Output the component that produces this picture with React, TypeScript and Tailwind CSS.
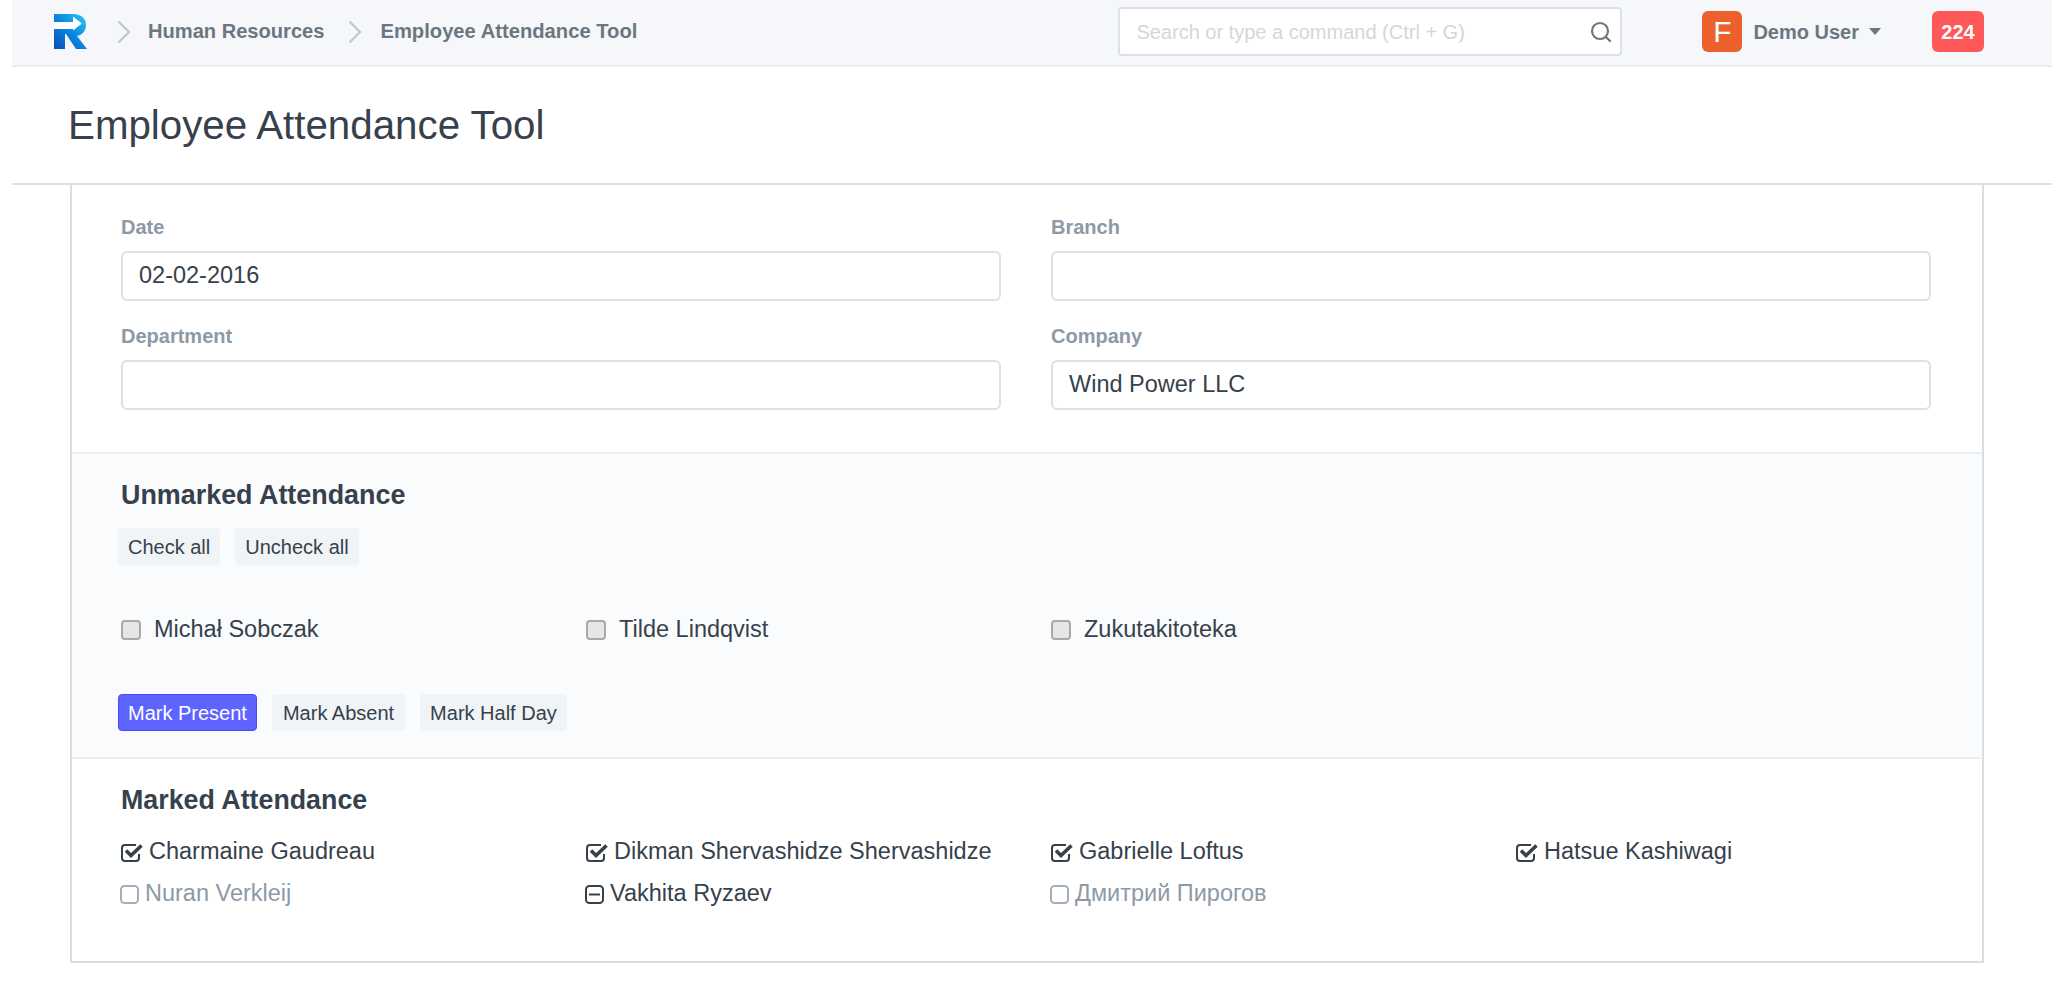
import { Search } from 'lucide-react'

const btn = 'h-[37px] px-[9px] rounded-[4px] border border-transparent bg-[#f0f4f7] text-[#36414c] text-[20px] flex items-center'

const unmarked = ['Michał Sobczak', 'Tilde Lindqvist', 'Zukutakitoteka']

const marked: { name: string; state: 'checked' | 'empty' | 'half' }[] = [
  { name: 'Charmaine Gaudreau', state: 'checked' },
  { name: 'Dikman Shervashidze Shervashidze', state: 'checked' },
  { name: 'Gabrielle Loftus', state: 'checked' },
  { name: 'Hatsue Kashiwagi', state: 'checked' },
  { name: 'Nuran Verkleij', state: 'empty' },
  { name: 'Vakhita Ryzaev', state: 'half' },
  { name: 'Дмитрий Пирогов', state: 'empty' },
]

function Logo() {
  return (
    <svg width="34" height="35" viewBox="0 0 34 35" className="shrink-0">
      <defs>
        <linearGradient id="logoBlue" x1="0" y1="1" x2="1" y2="0">
          <stop offset="0" stopColor="#0a4fb4" />
          <stop offset="0.5" stopColor="#0b86e0" />
          <stop offset="1" stopColor="#2cc8f4" />
        </linearGradient>
      </defs>
      <path d="M0 0H19C28 0 32 5 32 11C32 17 28 21 23 22L33 35H22L12 20H11V35H0Z" fill="url(#logoBlue)" />
      <path d="M0 8H19V2.5L28 9.5L19 16.5V15H0Z" fill="#fff" />
    </svg>
  )
}

function Crumb() {
  return (
    <svg width="14" height="24" viewBox="0 0 14 24" fill="none" className="shrink-0">
      <path d="M1.5 1.5L12 12L1.5 22.5" stroke="#c0c9d1" strokeWidth="2.4" />
    </svg>
  )
}

function StateIcon({ state }: { state: 'checked' | 'empty' | 'half' }) {
  if (state === 'checked') {
    return (
      <svg width="22" height="19" viewBox="0 0 22 19" fill="none" className="shrink-0">
        <path d="M18 11V15C18 17 17 18 15 18H4C2 18 1 17 1 15V5C1 3 2 2 4 2H15" stroke="#36414c" strokeWidth="2" />
        <path d="M5 7.5L10 12.5L20.5 2.5" stroke="#36414c" strokeWidth="3.6" />
      </svg>
    )
  }
  const color = state === 'half' ? '#36414c' : '#a3afba'
  return (
    <svg width="19" height="19" viewBox="0 0 19 19" fill="none" className="shrink-0">
      <rect x="1" y="1" width="17" height="17" rx="3.5" stroke={color} strokeWidth="2" />
      {state === 'half' && <path d="M4 9.5H15" stroke={color} strokeWidth="2" />}
    </svg>
  )
}

function Field({ label, value }: { label: string; value?: string }) {
  return (
    <div>
      <div className="h-[25px] flex items-center text-[20px] font-bold text-[#8d99a6]">{label}</div>
      <div className="mt-[12px] h-[50px] rounded-[6px] border-2 border-[#dce1e5] bg-white px-[16px] flex items-center text-[23.5px] text-[#36414c]">
        {value}
      </div>
    </div>
  )
}

export default function App() {
  return (
    <div className="min-h-screen bg-white pl-3 font-['Liberation_Sans','Noto_Sans',sans-serif] text-[#36414c]">
      <header className="h-[67px] bg-[#f5f7fa] border-b-2 border-[#ebeff2] flex items-center pb-[2px] pl-[42px] pr-[68px]">
        <Logo />
        <div className="ml-[29px]"><Crumb /></div>
        <span className="ml-[17px] text-[20.1px] font-bold text-[#6c7680]">Human Resources</span>
        <div className="ml-[24px]"><Crumb /></div>
        <span className="ml-[18px] text-[20.2px] font-bold text-[#6c7680]">Employee Attendance Tool</span>
        <div className="ml-auto w-[504px] h-[49px] rounded-[4px] border-2 border-[#dce1e5] bg-white flex items-center justify-between pl-[16px] pr-[7px] text-[20px] text-[#d1d8dd]">
          <span>Search or type a command (Ctrl + G)</span>
          <Search size={24} strokeWidth={2.2} className="text-[#6c7680]" />
        </div>
        <div className="ml-[80px] w-[40px] h-[41px] rounded-[6px] bg-[#ec602e] text-white text-[30px] flex items-center justify-center">F</div>
        <span className="ml-[11px] text-[20px] font-bold text-[#6c7680]">Demo User</span>
        <span className="ml-[10px] w-0 h-0 border-x-[6px] border-x-transparent border-t-[7px] border-t-[#6c7680]" />
        <div className="ml-[51px] w-[52px] h-[41px] rounded-[6px] bg-[#ff5858] text-white text-[20px] font-bold flex items-center justify-center">224</div>
      </header>

      <div className="h-[118px] border-b-2 border-[#dce1e5] flex items-center pl-[56px] pt-[2px]">
        <h1 className="text-[40.3px] text-[#36414c]">Employee Attendance Tool</h1>
      </div>

      <main className="ml-[58px] mr-[68px] border-x-2 border-b-2 border-[#d8dee3]">
        <section className="h-[269px] pt-[29px] pl-[49px] border-b-2 border-[#ebeff2]">
          <div className="grid grid-cols-[880px_880px] gap-x-[50px] gap-y-[22px]">
            <Field label="Date" value="02-02-2016" />
            <Field label="Branch" />
            <Field label="Department" />
            <Field label="Company" value="Wind Power LLC" />
          </div>
        </section>

        <section className="h-[305px] bg-[#fafbfc] border-b-2 border-[#ebeff2] pl-[46px] pt-[27px]">
          <h2 className="ml-[3px] h-[28px] flex items-center text-[26.9px] font-bold">Unmarked Attendance</h2>
          <div className="mt-[19px] flex gap-[15px]">
            <button className={btn}>Check all</button>
            <button className={btn}>Uncheck all</button>
          </div>
          <div className="mt-[47px] ml-[3px] grid grid-cols-[repeat(4,465px)] h-[26px]">
            {unmarked.map((name) => (
              <label key={name} className="flex items-center gap-[13px] text-[23.5px]">
                <span className="w-[20px] h-[20px] rounded-[4px] border-2 border-[#a9a9a9] bg-[#e6e6e6]" />
                {name}
              </label>
            ))}
          </div>
          <div className="mt-[56px] flex gap-[15px]">
            <button className={`${btn} !bg-[#5e64ff] !text-white !border-[#444bff]`}>Mark Present</button>
            <button className={`${btn} !px-[10px]`}>Mark Absent</button>
            <button className={btn}>Mark Half Day</button>
          </div>
        </section>

        <section className="h-[202px] pl-[49px] pt-[27px]">
          <h2 className="h-[28px] flex items-center text-[26.8px] font-bold">Marked Attendance</h2>
          <div className="mt-[17px] grid grid-cols-[repeat(4,465px)] auto-rows-[42px]">
            {marked.map((m) => (
              <div key={m.name} className={`flex items-center text-[23.5px] ${m.state === 'checked' ? 'gap-[6px]' : 'gap-[6px] -ml-px'} ${m.state === 'empty' ? 'text-[#8d99a6]' : ''}`}>
                <StateIcon state={m.state} />
                {m.name}
              </div>
            ))}
          </div>
        </section>
      </main>
    </div>
  )
}
